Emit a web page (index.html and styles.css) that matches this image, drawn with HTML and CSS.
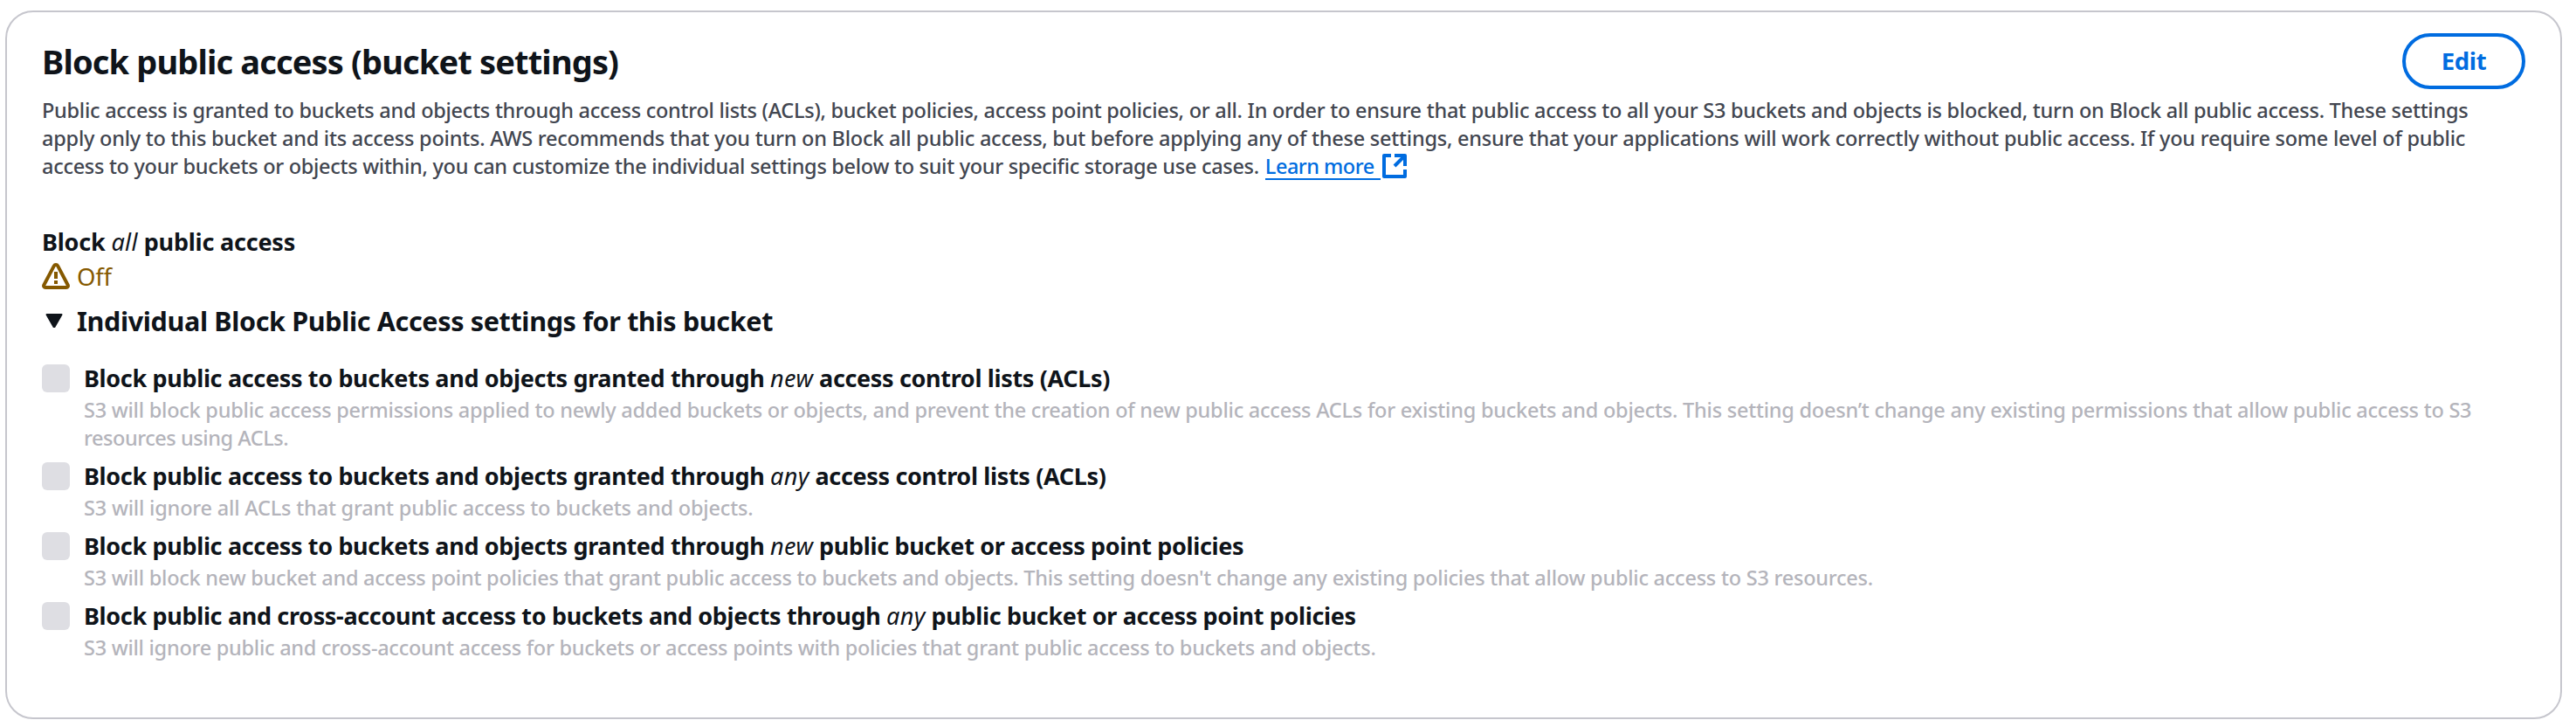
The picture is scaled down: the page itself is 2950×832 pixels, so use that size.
FILE: index.html
```html
<!DOCTYPE html>
<html lang="en">
<head>
<meta charset="utf-8">
<title>Block public access</title>
<link rel="stylesheet" href="styles.css">
</head>
<body>
<section class="card">
  <header class="header">
    <div class="heading">
      <h2 class="title">Block public access (bucket settings)</h2>
      <p class="intro">
        <span class="line intro-1">Public access is granted to buckets and objects through access control lists (ACLs), bucket policies, access point policies, or all. In order to ensure that public access to all your S3 buckets and objects is blocked, turn on Block all public access. These settings</span>
        <span class="line intro-2">apply only to this bucket and its access points. AWS recommends that you turn on Block all public access, but before applying any of these settings, ensure that your applications will work correctly without public access. If you require some level of public</span>
        <span class="line intro-3"><span>access to your buckets or objects within, you can customize the individual settings below to suit your specific storage use cases.</span><a class="link">Learn more</a><svg class="external" viewBox="0 0 28 28"><path d="M10 2H2v24h24v-8M14 2h12v12M25 3 14 14" fill="none" stroke="currentColor" stroke-width="4" stroke-linejoin="round"/></svg></span>
      </p>
    </div>
    <button class="edit">Edit</button>
  </header>
  <div class="status-label">Block <em>all</em> public access</div>
  <div class="status"><svg class="warning" viewBox="0 0 32 32"><path d="M16 2c-1 0-1.700.5-2.200 1.400L2.400 25c-.8 1.500 0 3 1.700 3h23.800c1.700 0 2.500-1.500 1.700-3L18.200 3.400c-.5-.9-1.200-1.400-2.200-1.400Z" fill="none" stroke="currentColor" stroke-width="4"/><path d="M16 10v8M16 20v4" stroke="currentColor" stroke-width="4"/></svg><span>Off</span></div>
  <h3 class="expander"><svg class="caret" viewBox="0 0 20 16"><path d="M1.500 1h17L10.500 15h-1Z" fill="currentColor" stroke="currentColor" stroke-width="2" stroke-linejoin="round"/></svg><span>Individual Block Public Access settings for this bucket</span></h3>
  <ul class="settings">
    <li class="setting"><span class="box"></span><div>
      <div class="label">Block public access to buckets and objects granted through <em>new</em> access control lists (ACLs)</div>
      <div class="hint"><span class="line">S3 will block public access permissions applied to newly added buckets or objects, and prevent the creation of new public access ACLs for existing buckets and objects. This setting doesn’t change any existing permissions that allow public access to S3</span><span class="line hint-tail">resources using ACLs.</span></div>
    </div></li>
    <li class="setting"><span class="box"></span><div>
      <div class="label">Block public access to buckets and objects granted through <em>any</em> access control lists (ACLs)</div>
      <div class="hint"><span class="line hint-short">S3 will ignore all ACLs that grant public access to buckets and objects.</span></div>
    </div></li>
    <li class="setting"><span class="box"></span><div>
      <div class="label">Block public access to buckets and objects granted through <em>new</em> public bucket or access point policies</div>
      <div class="hint"><span class="line">S3 will block new bucket and access point policies that grant public access to buckets and objects. This setting doesn't change any existing policies that allow public access to S3 resources.</span></div>
    </div></li>
    <li class="setting"><span class="box"></span><div>
      <div class="label">Block public and cross-account access to buckets and objects through <em>any</em> public bucket or access point policies</div>
      <div class="hint"><span class="line hint-last">S3 will ignore public and cross-account access for buckets or access points with policies that grant public access to buckets and objects.</span></div>
    </div></li>
  </ul>
</section>
</body>
</html>
```
FILE: styles.css
```css
* { box-sizing: border-box; }
body { margin: 0; padding: 12px 16px 9px 6px; height: 832px; background: #fff; font-family: "Noto Sans", sans-serif; color: #0f141a; }
.card { height: 811px; border: 2px solid #c6c6cd; border-radius: 32px; padding: 24px 40px; }
.header { display: flex; height: 213px; }
.heading { width: 2703px; flex: none; }
.title { margin: 7px 0 0; font-size: 38px; line-height: 50px; font-weight: 700; white-space: nowrap; letter-spacing: -0.85px; }
.intro { margin: 15px 0 0; font-size: 23.5px; line-height: 32px; font-weight: 500; color: #424650; letter-spacing: -0.26px; }
.line { display: block; white-space: nowrap; }
.intro-2 { letter-spacing: -0.235px; }
.intro-3 { display: flex; align-items: center; letter-spacing: -0.295px; }
.link { color: #006ce0; margin-left: 7px; padding-right: 7px; height: 32px; border-bottom: 2px solid #006ce0; letter-spacing: -0.5px; }
.external { width: 28px; height: 28px; margin-left: 2px; color: #006ce0; }
.edit { flex: none; width: 141px; height: 64px; border: 4px solid #006ce0; border-radius: 32px; background: #fff; color: #006ce0; font: 700 27.5px "Noto Sans", sans-serif; letter-spacing: -0.3px; padding: 0 0 2px; }
em { font-weight: 400; letter-spacing: 0.4px; }
.status-label { margin-top: 6px; font-size: 27px; line-height: 40px; font-weight: 700; letter-spacing: -0.2px; }
.status { display: flex; align-items: center; gap: 8px; font-size: 27.5px; line-height: 40px; color: #855900; letter-spacing: -0.2px; }
.warning { width: 32px; height: 32px; }
.expander { display: flex; align-items: center; margin: 8px 0 0; font-size: 30.5px; line-height: 44px; font-weight: 700; letter-spacing: -0.34px; }
.caret { width: 20px; height: 16px; margin: 0 16px 0 4px; }
.settings { list-style: none; margin: 24px 0 0; padding: 0; display: grid; gap: 8px; }
.setting { display: flex; gap: 16px; }
.box { flex: none; width: 32px; height: 32px; margin-top: 4px; border-radius: 6px; background: #dedee3; }
.label { font-size: 27px; line-height: 40px; font-weight: 700; white-space: nowrap; letter-spacing: -0.34px; }
.hint { font-size: 23.5px; line-height: 32px; font-weight: 500; color: #b4b4bb; letter-spacing: -0.235px; }
.hint-tail { letter-spacing: -0.45px; }
.hint-short { letter-spacing: -0.19px; }
.hint-last { letter-spacing: -0.26px; }
```
